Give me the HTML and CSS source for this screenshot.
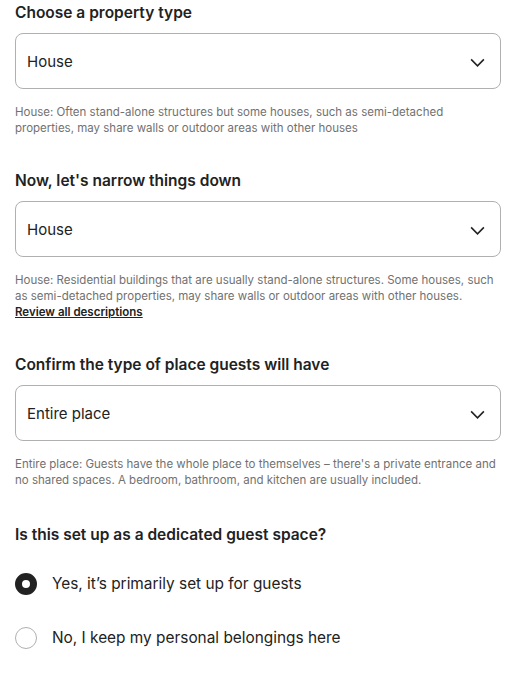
FILE: index.html
```html
<!DOCTYPE html>
<html lang="en">
<head>
  <meta charset="UTF-8">
  <title>Property type</title>
  <link rel="stylesheet" href="styles.css">
</head>
<body>

<div class="form">
  <div class="section">
    <h2 class="label">Choose a property type</h2>
    <div class="select">
      <span>House</span>
      <svg class="chev" viewBox="0 0 32 32"><path d="M28 12 16 24 4 12"/></svg>
    </div>
    <p class="help">House: Often stand-alone structures but some houses, such as semi-detached properties, may share walls or outdoor areas with other houses</p>
  </div>

  <div class="section">
    <h2 class="label">Now, let's narrow things down</h2>
    <div class="select">
      <span>House</span>
      <svg class="chev" viewBox="0 0 32 32"><path d="M28 12 16 24 4 12"/></svg>
    </div>
    <p class="help">House: Residential buildings that are usually stand-alone structures. Some houses, such as semi-detached properties, may share walls or outdoor areas with other houses.<br><a href="#" class="link">Review all descriptions</a></p>
  </div>

  <div class="section">
    <h2 class="label">Confirm the type of place guests will have</h2>
    <div class="select">
      <span>Entire place</span>
      <svg class="chev" viewBox="0 0 32 32"><path d="M28 12 16 24 4 12"/></svg>
    </div>
    <p class="help">Entire place: Guests have the whole place to themselves – there's a private entrance and no shared spaces. A bedroom, bathroom, and kitchen are usually included.</p>
  </div>

  <div class="section guest">
    <h2 class="label">Is this set up as a dedicated guest space?</h2>
    <div class="radios">
      <label class="radio"><span class="dot checked"></span>Yes, it’s primarily set up for guests</label>
      <label class="radio"><span class="dot"></span>No, I keep my personal belongings here</label>
    </div>
  </div>
</div>

</body>
</html>
```

FILE: styles.css
```css
* { box-sizing: border-box; }
body {
  margin: 0;
  font-family: "Inter", "Noto Sans", sans-serif;
  color: #222;
  background: #fff;
}
.form {
  padding: 3px 22px 0 15px;
}
.section { margin-bottom: 35px; }
.guest { padding-top: 2px; }
.label {
  font-size: 15.5px;
  font-weight: 600;
  line-height: 20px;
  margin: 0 0 10px;
}
.select {
  height: 56px;
  border: 1px solid #b0b0b0;
  border-radius: 8px;
  display: flex;
  align-items: center;
  justify-content: space-between;
  padding: 0 14px 0 11px;
  font-size: 15px;
}
.chev {
  width: 17px; height: 17px;
  fill: none;
  stroke: #222;
  stroke-width: 3;
}
.help {
  margin: 15px 0 0;
  font-size: 11.5px;
  line-height: 16px;
  color: #717171;
}
.link {
  color: #222;
  font-weight: 600;
  text-decoration: underline;
}
.radios {
  display: flex;
  flex-direction: column;
  gap: 32px;
  padding-top: 18px;
}
.radio {
  display: flex;
  align-items: center;
  gap: 15px;
  font-size: 15.4px;
  line-height: 22px;
}
.dot {
  width: 22px; height: 22px;
  border-radius: 50%;
  border: 1px solid #b0b0b0;
  flex: none;
}
.dot.checked {
  border: 7px solid #222;
}
```
